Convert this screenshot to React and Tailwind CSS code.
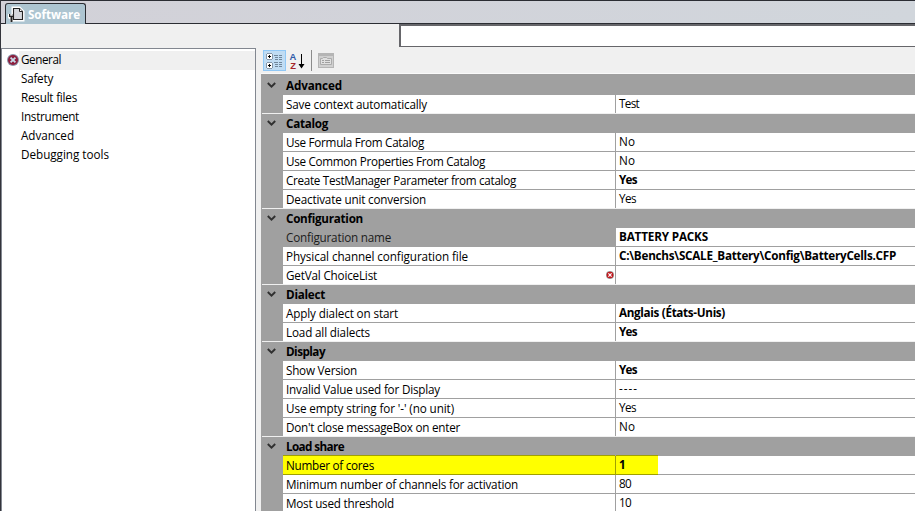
const FONT = "font-['Open_Sans','Noto_Sans',sans-serif]";

const groups = [
  { title: 'Advanced', w: 56, rows: [{ k: 'Save context automatically', w: 141, v: 'Test', vw: 20 }] },
  {
    title: 'Catalog', w: 42, rows: [
      { k: 'Use Formula From Catalog', w: 138, v: 'No', vw: 16 },
      { k: 'Use Common Properties From Catalog', w: 199, v: 'No', vw: 16 },
      { k: 'Create TestManager Parameter from catalog', w: 230, v: 'Yes', vw: 18, bold: true },
      { k: 'Deactivate unit conversion', w: 140, v: 'Yes', vw: 17 },
    ],
  },
  {
    title: 'Configuration', w: 77, rows: [
      { k: 'Configuration name', w: 105, v: 'BATTERY PACKS', vw: 89, bold: true, selected: true },
      { k: 'Physical channel configuration file', w: 182, v: 'C:\\Benchs\\SCALE_Battery\\Config\\BatteryCells.CFP', vw: 277, bold: true },
      { k: 'GetVal ChoiceList', w: 91, v: '', vw: 0, error: true },
    ],
  },
  {
    title: 'Dialect', w: 39, rows: [
      { k: 'Apply dialect on start', w: 112, v: 'Anglais (États-Unis)', vw: 106, bold: true },
      { k: 'Load all dialects', w: 84, v: 'Yes', vw: 18, bold: true },
    ],
  },
  {
    title: 'Display', w: 39, rows: [
      { k: 'Show Version', w: 71, v: 'Yes', vw: 18, bold: true },
      { k: 'Invalid Value used for Display', w: 154, v: '----', vw: 19 },
      { k: "Use empty string for '-' (no unit)", w: 168, v: 'Yes', vw: 17 },
      { k: "Don't close messageBox on enter", w: 174, v: 'No', vw: 16 },
    ],
  },
  {
    title: 'Load share', w: 58, rows: [
      { k: 'Number of cores', w: 88, v: '1', vw: 6, bold: true, marked: true },
      { k: 'Minimum number of channels for activation', w: 232, v: '80', vw: 12 },
      { k: 'Most used threshold', w: 108, v: '10', vw: 12 },
    ],
  },
];

const categories = [
  ['General', 40], ['Safety', 32], ['Result files', 56], ['Instrument', 58], ['Advanced', 53], ['Debugging tools', 88],
];

// Text run whose letter spacing is adjusted so that it occupies a given width.
function Fit({ w, className = '', children }) {
  const fit = (el) => {
    if (!el || !w) return;
    el.style.letterSpacing = '0px';
    const natural = el.getBoundingClientRect().width;
    el.style.letterSpacing = `${(w - natural) / children.length}px`;
  };
  return <span ref={fit} className={`inline-block whitespace-pre ${className}`}>{children}</span>;
}

function ErrorIcon({ size, muted }) {
  return (
    <svg width={size} height={size} viewBox="0 0 12 12" className="shrink-0">
      <circle cx="6" cy="6" r="6" fill={muted ? '#8a93a8' : '#9c9c9c'} />
      <circle cx="6" cy="6" r="5" fill={muted ? '#8d1d3c' : '#c3161c'} />
      <path d="M3.6 3.6 8.4 8.4M8.4 3.6 3.6 8.4" stroke={muted ? '#c5dbea' : '#fff'} strokeWidth="1.8" />
    </svg>
  );
}

function Chevron() {
  return (
    <svg width="10" height="7" viewBox="0 0 10 7" className="ml-[5px] mt-[6px] block">
      <path d="M.8 1 4.5 4.7 8.2 1" fill="none" stroke="#303030" strokeWidth="1.9" />
    </svg>
  );
}

function Group({ title, w, rows }) {
  return (
    <section>
      <div className="flex h-[19px] bg-[#a0a0a0]">
        <div className="w-[21px] shrink-0"><Chevron /></div>
        <Fit w={w} className="ml-[3px] mt-px font-bold leading-[17px]">{title}</Fit>
      </div>
      {rows.map((r, i) => {
        const last = i === rows.length - 1;
        const line = last ? 'border-[#f0f0f0]' : 'border-[#a0a0a0]';
        return (
          <div key={r.k} className={`flex h-[19px] ${last ? 'border-b border-[#f0f0f0]' : ''}`}>
            <div className="w-[21px] shrink-0 bg-[#a0a0a0]" />
            <div className={`flex w-[332px] shrink-0 pl-[3px] ${last ? '' : 'border-b'} ${r.marked ? 'border-[#a0a000] bg-[#ffff00] shadow-[0_-1px_0_#a0a000]' : r.selected ? 'border-[#a0a0a0] bg-[#a0a0a0]' : `bg-white ${line}`}`}>
              <Fit w={r.w} className={`mt-px leading-[17px] ${r.selected ? 'text-[#1c1c1c]' : ''}`}>{r.k}</Fit>
              {r.error && <div className="ml-auto mr-[1px] mt-[5px]"><ErrorIcon size={8} /></div>}
            </div>
            <div className={`w-px shrink-0 ${r.marked ? 'bg-[#a0a000]' : 'bg-[#a0a0a0]'}`} />
            {r.marked ? (
              <>
                <div className="w-[42px] shrink-0 border-b border-[#a0a000] bg-[#ffff00] pl-[3px] shadow-[0_-1px_0_#a0a000]">
                  <Fit w={r.vw} className="font-bold leading-[17px]">{r.v}</Fit>
                </div>
                <div className="grow border-b border-[#a0a0a0] bg-white" />
              </>
            ) : (
              <div className={`flex grow bg-white pl-[3px] ${last ? '' : 'border-b border-[#a0a0a0]'}`}>
                {r.v && <Fit w={r.vw} className={`leading-[17px] ${r.bold ? 'font-bold' : ''}`}>{r.v}</Fit>}
              </div>
            )}
          </div>
        );
      })}
    </section>
  );
}

function Toolbar() {
  return (
    <div className="flex h-[26px] shrink-0 items-start border-b border-[#fafafa] bg-[#f0f0f0] pl-[2px] pt-[2px]">
      <div className="flex h-[21px] w-[23px] items-center justify-center border border-[#90c8f6] bg-[#c0dcf3]">
        <svg width="18" height="17" viewBox="0 0 18 17" shapeRendering="crispEdges">
          <path d="M1 1h5v1h1v5H6v1H1V7H0V2h1zM1 10h5v1h1v5H6v1H1v-1H0v-5h1z" fill="#8797a8" />
          <path d="M1 2h5v5H1zM1 11h5v5H1z" fill="#fff" />
          <path d="M3 3h1v1h1v1H4v1H3V5H2V4h1zM3 12h1v1h1v1H4v1H3v-1H2v-1h1z" fill="#000" />
          <path d="M8 3h4v1H8zM9 5h3v1H9zM9 7h3v1H9zM8 10h4v1H8zM9 12h3v1H9zM9 14h3v1H9zM13 3h3v1h-3zM13 5h3v1h-3zM13 7h3v1h-3zM13 10h3v1h-3zM13 12h3v1h-3zM13 14h3v1h-3z" fill="#71879b" />
        </svg>
      </div>
      <div className="ml-[3px] flex h-[21px] w-[16px] items-center">
        <div className="flex w-[8px] flex-col items-center font-['Liberation_Sans',sans-serif] text-[9.4px] font-bold leading-[9px]">
          <span className="block h-[9px] text-[#2f5aa8]">A</span>
          <span className="block h-[9px] text-[#a5262b]">Z</span>
        </div>
        <svg width="7" height="16" viewBox="0 0 7 16" className="ml-[1px] shrink-0">
          <path d="M3 1h1v10h2.5L3.5 15.5 .5 11H3z" fill="#000" />
        </svg>
      </div>
      <div className="ml-[6px] h-[21px] w-px bg-[#8c8c8c]" />
      <svg width="16" height="15" viewBox="0 0 16 15" className="ml-[6px] mt-[3px]">
        <path d="M0 0h16v15H0z" fill="#b5b5b5" />
        <path d="M1 3h14v11H1z" fill="#d0d0d0" />
        <path d="M2.5 5.5h2l1-1h3l1 1h4v6h-11z" fill="#e0e0e0" stroke="#ababab" />
        <path d="M4 7.5h2M7 7.5h5M4 9.5h2M7 9.5h5" stroke="#a0a0a0" />
      </svg>
    </div>
  );
}

export default function App() {
  return (
    <div className={`flex h-[511px] w-[915px] flex-col overflow-hidden border-l border-[#33343b] bg-[#f0f0f0] text-[11.7px] text-black ${FONT}`}>
      <header className="flex h-[24px] shrink-0 items-end border-b border-[#2b2d33] bg-[#d1d5db] bg-linear-to-r from-[#d2d1d8] to-[#d1d6dc] shadow-[inset_0_1px_0_#2b2d33]">
        <div className="-mb-px ml-[4px] flex h-[21px] w-[81px] rounded-t-[3px] border border-b-0 border-[#2b2d33] bg-[#adc5d1]">
          <svg width="17" height="17" viewBox="0 0 17 17" className="ml-[2px] mt-[2px] shrink-0">
            <path d="M5 2h6.5L15 5.5V14H5z" fill="#d5d8dd" stroke="#fff" strokeWidth="3" />
            <path d="M1.5 8v3l2 1.5 2-1.5V8M3.5 11v5" fill="none" stroke="#fff" strokeWidth="3.2" />
            <path d="M5.5 2.5h6L14.5 5.5v8h-9z" fill="#d5d8dd" stroke="#222" strokeWidth="1.1" />
            <path d="M11.5 2.5v3h3" fill="#fff" stroke="#222" />
            <path d="M1 8v3h1.5v5h2v-5H6V8H4.7v1.7H2.3V8z" fill="#222" />
          </svg>
          <Fit w={52} className="ml-[3px] mt-[2px] font-bold leading-[17px] text-white">Software</Fit>
        </div>
      </header>
      <div className="flex h-[24px] shrink-0">
        <div className="ml-[398px] h-[23px] grow border-b border-l-2 border-t-2 border-[#66666a] bg-white" />
      </div>
      <main className="flex min-h-0 grow">
        <nav className="flex w-[255px] shrink-0 flex-col border-l border-r border-t border-[#828790] bg-white">
          {categories.map(([name, w], i) => (
            <div key={name} className="mt-px flex h-[18px] items-center first:mt-[2px]">
              <div className="flex w-[17px] shrink-0 justify-end">
                {i === 0 && <ErrorIcon size={12} muted />}
              </div>
              <div className={`flex h-[19px] grow items-center pb-[2px] pl-[2px] ${i === 0 ? 'bg-[#f0f0f0]' : ''}`}>
                <Fit w={w} className="leading-[16px]">{name}</Fit>
              </div>
            </div>
          ))}
        </nav>
        <div className="ml-[5px] flex grow flex-col">
          <Toolbar />
          <div className="border-l border-t-2 border-[#a0a0a0]">
            {groups.map((g) => <Group key={g.title} {...g} />)}
          </div>
        </div>
      </main>
    </div>
  );
}
